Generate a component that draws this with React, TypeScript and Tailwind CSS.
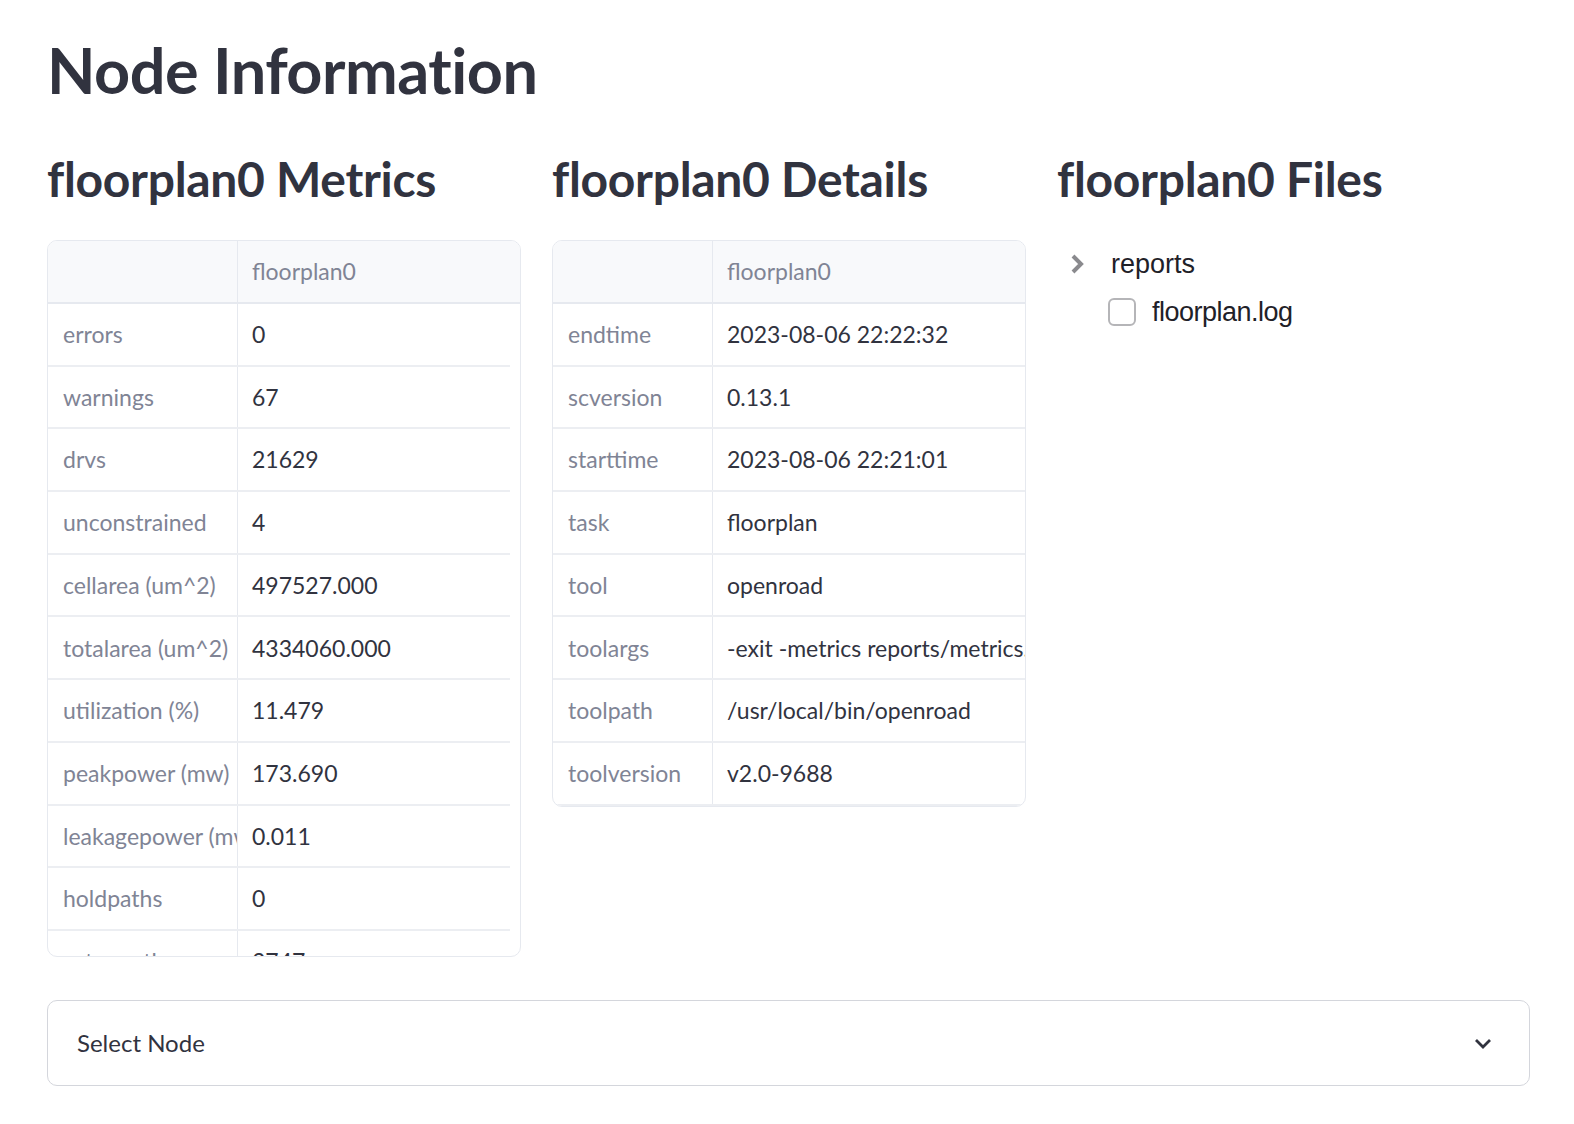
import React from "react";

const F = { fontFamily: "Lato, 'Noto Sans', sans-serif" };

function Table({ rows, c1, c2, h, cut }: { rows: [string, string][]; c1: number; c2: number; h?: number; cut?: boolean }) {
  return (
    <div className="border border-[#e6e9ef] rounded-[10px] overflow-hidden bg-white" style={{ width: c1 + c2 + (cut ? 12 : 0), height: h }}>
      <div className="flex h-[63px] bg-[#f8f9fb] border-b-2 border-[#e6e9ef]">
        <div className="border-r border-[#e6e9ef] shrink-0" style={{ width: c1 }} />
        <div className="flex items-center px-[14px] text-[23px] text-[#808495]" style={{ width: c2 }}>floorplan0</div>
      </div>
      {rows.map(([k, v]) => (
        <div key={k} className="flex h-[62.7px] border-b-2 border-[#eceef2]" style={{ width: c1 + c2 }}>
          <div className="flex items-center pl-[15px] text-[23px] text-[#808495] border-r border-[#e6e9ef] shrink-0 overflow-hidden whitespace-nowrap" style={{ width: c1 }}>{k}</div>
          <div className="flex items-center pl-[14px] text-[23px] text-[#31333f] overflow-hidden whitespace-nowrap" style={{ width: c2 }}>{v}</div>
        </div>
      ))}
    </div>
  );
}

export default function App() {
  const metrics: [string, string][] = [
    ["errors", "0"], ["warnings", "67"], ["drvs", "21629"], ["unconstrained", "4"],
    ["cellarea (um^2)", "497527.000"], ["totalarea (um^2)", "4334060.000"], ["utilization (%)", "11.479"],
    ["peakpower (mw)", "173.690"], ["leakagepower (mw)", "0.011"], ["holdpaths", "0"], ["setuppaths", "3747"],
  ];
  const details: [string, string][] = [
    ["endtime", "2023-08-06 22:22:32"], ["scversion", "0.13.1"], ["starttime", "2023-08-06 22:21:01"],
    ["task", "floorplan"], ["tool", "openroad"], ["toolargs", "-exit -metrics reports/metrics.json"],
    ["toolpath", "/usr/local/bin/openroad"], ["toolversion", "v2.0-9688"],
  ];
  return (
    <div className="bg-white min-h-[1124px] pl-[47px] text-[#31333f]" style={F}>
      <div className="w-[1483px]">
        <h1 className="text-[63px] font-bold leading-none pt-[38px] h-[148px] tracking-[-0.5px]">Node Information</h1>
        <div className="flex gap-[31px]">
          <div className="w-[474px]">
            <h2 className="text-[48px] font-bold leading-none h-[92px] pt-[7px] tracking-[-0.3px]">floorplan0 Metrics</h2>
            <Table rows={metrics} c1={190} c2={272} h={717} cut />
          </div>
          <div className="w-[474px]">
            <h2 className="text-[48px] font-bold leading-none h-[92px] pt-[7px] tracking-[-0.3px]">floorplan0 Details</h2>
            <Table rows={details} c1={160} c2={314} />
          </div>
          <div>
            <h2 className="text-[48px] font-bold leading-none h-[92px] pt-[7px] tracking-[-0.3px]">floorplan0 Files</h2>
            <div style={{ fontFamily: "'Liberation Sans', Arial, sans-serif" }} className="text-[27px] text-[#1f2128]">
              <div className="flex items-center h-[48px] pl-[12px]">
                <svg width="18" height="24" viewBox="0 0 18 24"><path d="M4 4l8 8-8 8" fill="none" stroke="#8a8a8e" strokeWidth="4" /></svg>
                <span className="ml-[24px]">reports</span>
              </div>
              <div className="flex items-center h-[48px] pl-[51px]">
                <div className="w-[28px] h-[28px] border-[2.5px] border-[#b5b5b8] rounded-[6px]" />
                <span className="ml-[16px] tracking-[-0.5px]">floorplan.log</span>
              </div>
            </div>
          </div>
        </div>
        <div className="mt-[43px] h-[86px] border border-[#d4d6dc] rounded-[10px] flex items-center justify-between pl-[29px] pr-[34px]">
          <span className="text-[24px]">Select Node</span>
          <svg width="24" height="24" viewBox="0 0 24 24"><path d="M5 9l7 7 7-7" fill="none" stroke="#31333f" strokeWidth="2.8" /></svg>
        </div>
      </div>
    </div>
  );
}
